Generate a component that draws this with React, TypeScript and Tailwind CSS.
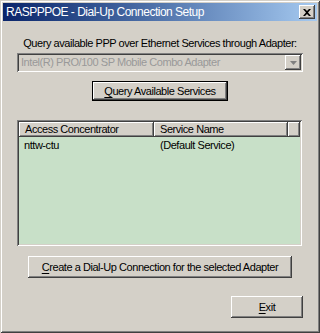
const raised =
  "shadow-[inset_-1px_-1px_#404040,inset_1px_1px_#ffffff,inset_-2px_-2px_#808080,inset_2px_2px_#d4d0c8]";
const sunken =
  "shadow-[inset_1px_1px_#808080,inset_-1px_-1px_#ffffff,inset_2px_2px_#404040,inset_-2px_-2px_#d4d0c8]";

function Button({
  label,
  hot,
  className = "",
  isDefault = false,
}: {
  label: string;
  hot: number;
  className?: string;
  isDefault?: boolean;
}) {
  const before = label.slice(0, hot);
  const key = label.slice(hot, hot + 1);
  const after = label.slice(hot + 1);
  return (
    <div
      className={`flex items-center justify-center bg-[#d4d0c8] text-black ${
        isDefault ? "border border-black" : ""
      } ${className}`}
    >
      <div className={`flex h-full w-full items-center justify-center whitespace-nowrap ${raised}`}>
        <span>
          {before}
          <span className="underline underline-offset-2">{key}</span>
          {after}
        </span>
      </div>
    </div>
  );
}

export default function App() {
  return (
    <div
      className="flex h-[333px] w-[320px] flex-col bg-[#d4d0c8] p-[3px] text-[11px] tracking-[-0.45px] shadow-[inset_1px_1px_#d4d0c8,inset_-1px_-1px_#404040,inset_2px_2px_#ffffff,inset_-2px_-2px_#808080]"
      style={{ fontFamily: '"Liberation Sans", Arial, sans-serif' }}
    >
      {/* title bar */}
      <div className="flex h-[18px] items-center justify-between bg-gradient-to-r from-[#0a246a] to-[#a6caf0] pl-[3px] pr-[2px]">
        <span className="text-[12px] leading-none tracking-[-0.5px] text-white">
          RASPPPOE - Dial-Up Connection Setup
        </span>
        <div className={`flex h-[14px] w-[16px] items-center justify-center bg-[#d4d0c8] ${raised}`}>
          <svg width="8" height="7" viewBox="0 0 8 7">
            <path d="M0 0h2l2 2 2-2h2L5 3.5 8 7H6L4 5 2 7H0l3-3.5z" fill="#000" />
          </svg>
        </div>
      </div>

      <div className="flex flex-1 flex-col px-[14px]">
        <div className="mt-[15px] whitespace-nowrap text-center leading-[14px] text-black">
          Query available PPP over Ethernet Services through Adapter:
        </div>

        {/* disabled combo */}
        <div className={`mt-[3px] flex h-[19px] w-[286px] items-center justify-between bg-[#d4d0c8] p-[2px] ${sunken}`}>
          <span className="pl-[2px] text-[#999999]">
            Intel(R) PRO/100 SP Mobile Combo Adapter
          </span>
          <div className={`flex h-[15px] w-[16px] items-center justify-center bg-[#d4d0c8] ${raised}`}>
            <svg width="7" height="4" viewBox="0 0 7 4">
              <path d="M0 0h7L3.5 4z" fill="#808080" />
            </svg>
          </div>
        </div>

        <div className="mt-[9px] flex justify-center">
          <Button label="Query Available Services" hot={0} isDefault className="h-[20px] w-[136px]" />
        </div>

        {/* list view */}
        <div className={`mt-[19px] flex h-[126px] w-[285px] flex-col bg-[#c8e0c8] p-[2px] ${sunken}`}>
          <div className="flex h-[15px] leading-[15px] text-black">
            <div className={`w-[135px] bg-[#d4d0c8] pl-[6px] ${raised}`}>Access Concentrator</div>
            <div className={`w-[134px] bg-[#d4d0c8] pl-[6px] ${raised}`}>Service Name</div>
            <div className={`flex-1 bg-[#d4d0c8] ${raised}`} />
          </div>
          <div className="mt-[1px] flex leading-[14px] text-black">
            <div className="w-[135px] pl-[5px]">nttw-ctu</div>
            <div className="pl-[6px]">(Default Service)</div>
          </div>
        </div>

        <div className="mt-[10px] flex pl-[11px]">
          <Button label="Create a Dial-Up Connection for the selected Adapter" hot={0} className="h-[22px] w-[264px]" />
        </div>

        <div className="mt-[18px] flex justify-end">
          <Button label="Exit" hot={0} className="h-[22px] w-[72px]" />
        </div>
      </div>
    </div>
  );
}
